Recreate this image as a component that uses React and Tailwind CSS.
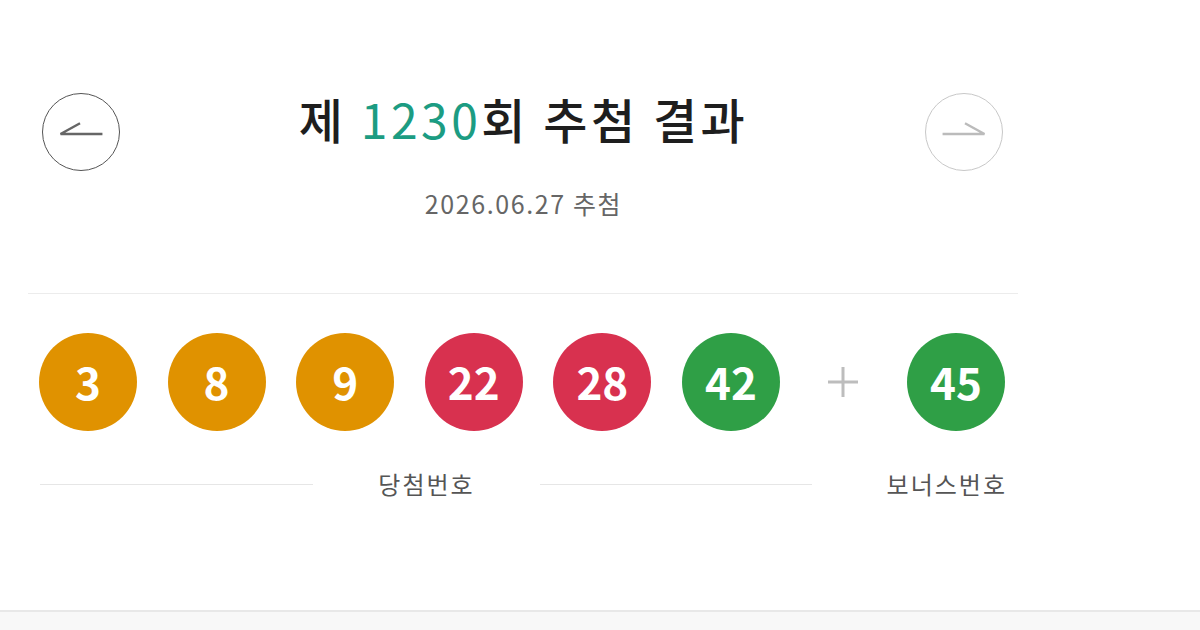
import React from 'react';

const FONT = { fontFamily: '"Noto Sans CJK KR", "Noto Sans", sans-serif' };

const BALL_COLORS = {
  yellow: 'bg-[#e09200]',
  red: 'bg-[#d8314f]',
  green: 'bg-[#2f9f46]',
};

// Ball colour follows the usual lotto ranges
function ballColor(n) {
  if (n <= 10) return BALL_COLORS.yellow;
  if (n <= 20) return 'bg-[#3f7fd8]';
  if (n <= 30) return BALL_COLORS.red;
  if (n <= 40) return 'bg-[#8a8a8a]';
  return BALL_COLORS.green;
}

function Ball({ n }) {
  return (
    <div
      className={`w-[98px] h-[98px] rounded-full flex items-center justify-center text-white text-[44px] font-bold ${ballColor(n)}`}
    >
      <span className="leading-none -mt-[2px]">{n}</span>
    </div>
  );
}

function ArrowButton({ dir }) {
  const prev = dir === 'prev';
  return (
    <button
      type="button"
      className={`w-[78px] h-[78px] rounded-full border-[1.5px] flex items-center justify-center bg-white ${
        prev ? 'border-[#555]' : 'border-[#c8c8c8]'
      }`}
    >
      <svg width="78" height="78" viewBox="0 0 78 78" fill="none">
        {prev ? (
          <path d="M61 41H18L38 30" stroke="#666" strokeWidth="2.5" />
        ) : (
          <path d="M17 41H60L40 30" stroke="#bbb" strokeWidth="2.5" />
        )}
      </svg>
    </button>
  );
}

export default function App() {
  const numbers = [3, 8, 9, 22, 28, 42];
  const bonus = 45;

  return (
    <div className="w-[1200px] h-[630px] bg-white flex flex-col overflow-hidden" style={FONT}>
      <div className="h-[610px] shrink-0">
        <div className="w-[990px] ml-[28px]">
          {/* draw header */}
          <div className="flex items-start justify-between pl-[14px] pr-[15px] pt-[93px]">
            <ArrowButton dir="prev" />
            <div className="flex flex-col items-center -mt-[5px] ml-[2px]">
              <h1 className="text-[48px] leading-[60px] font-medium text-[#1e1e1e] tracking-[3.5px]">
                제 <span className="text-[#1c9c82] font-normal">1230</span>회 추첨 결과
              </h1>
              <p className="mt-[39px] text-[25px] leading-[32px] text-[#666] tracking-[1.6px]">
                2026.06.27 추첨
              </p>
            </div>
            <ArrowButton dir="next" />
          </div>

          <div className="mt-[74px] border-t border-[#ececec]" />

          {/* winning numbers */}
          <div className="flex items-center pl-[11px] mt-[39px]">
            <div className="flex gap-[30.6px]">
              {numbers.map((n) => (
                <Ball key={n} n={n} />
              ))}
            </div>
            <div className="w-[127px] flex items-center justify-center">
              <svg width="34" height="34" viewBox="0 0 34 34">
                <path d="M17 2V32M2 17H32" stroke="#bdbdbd" strokeWidth="3" />
              </svg>
            </div>
            <Ball n={bonus} />
          </div>

          <div className="flex items-center pl-[12px] mt-[37px] text-[24px] leading-[32px] text-[#555] tracking-[2px]">
            <div className="w-[273px] border-t border-[#e6e6e6]" />
            <div className="w-[227px] text-center">당첨번호</div>
            <div className="w-[272px] border-t border-[#e6e6e6]" />
            <div className="flex-1 text-right pr-[11px]">보너스번호</div>
          </div>
        </div>
      </div>
      <div className="flex-1 border-t-2 border-[#e8e8e8] bg-[#f8f8f8]" />
    </div>
  );
}
